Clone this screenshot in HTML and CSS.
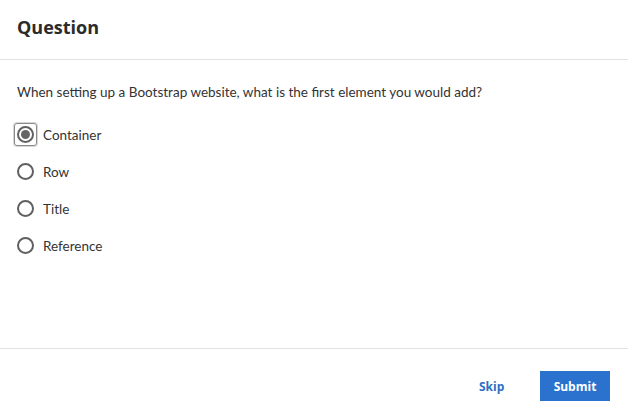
FILE: index.html
```html
<!DOCTYPE html>
<html>
<head>
<meta charset="utf-8">
<link rel="stylesheet" href="styles.css">
</head>
<body>
<div class="dialog">
  <header class="head"><h1 class="title">Question</h1></header>
  <main class="body">
    <p class="question">When setting up a Bootstrap website, what is the first element you would add?</p>
    <div class="options">
      <label class="opt"><span class="radio-wrap focus"><span class="radio checked"></span></span><span class="lbl">Container</span></label>
      <label class="opt"><span class="radio-wrap"><span class="radio"></span></span><span class="lbl">Row</span></label>
      <label class="opt"><span class="radio-wrap"><span class="radio"></span></span><span class="lbl">Title</span></label>
      <label class="opt"><span class="radio-wrap"><span class="radio"></span></span><span class="lbl">Reference</span></label>
    </div>
  </main>
  <footer class="foot">
    <button class="btn-link">Skip</button>
    <button class="btn-primary">Submit</button>
  </footer>
</div>
</body>
</html>
```
FILE: styles.css
```css
html, body { margin: 0; padding: 0; background: #fff; }
.dialog {
  width: 628px; height: 415px;
  display: flex; flex-direction: column;
  font-family: Lato, "Noto Sans", sans-serif;
  color: #333;
}
.head {
  box-sizing: border-box;
  border-bottom: 1px solid #e2e2e2;
  padding: 0 17px;
  display: flex; align-items: center;
  flex: none; height: 60px;
}
.title {
  margin: 0; font-family: "Open Sans", sans-serif; font-weight: 700;
  font-size: 18px; color: #2b2b2b; line-height: 24px; margin-top: -6px;
}
.body { flex: 1; padding: 23px 17px 0; }
.question { margin: 0; font-size: 13.5px; line-height: 18px; color: #333; }
.options { margin-top: 15px; display: flex; flex-direction: column; }
.opt { display: flex; align-items: center; height: 37px; }
.radio-wrap {
  width: 23px; height: 23px; box-sizing: border-box;
  margin-left: -3px; margin-right: 6px;
  display: flex; align-items: center; justify-content: center;
  border: 1px solid transparent; border-radius: 3px;
}
.radio-wrap.focus { border-color: #8a8a8a; box-shadow: 0 0 0 1px #d6d6d6; }
.radio {
  width: 17px; height: 17px; box-sizing: border-box;
  border: 2px solid #606060; border-radius: 50%;
  display: flex; align-items: center; justify-content: center;
}
.radio.checked::after {
  content: ""; width: 9px; height: 9px; border-radius: 50%; background: #666;
}
.lbl { font-size: 13.5px; color: #333; }
.foot {
  flex: none; height: 67px; box-sizing: border-box;
  border-top: 1px solid #e2e2e2;
  display: flex; justify-content: flex-end; align-items: flex-start;
  padding: 22px 18px 0 0; gap: 37px;
}
.btn-link, .btn-primary {
  font-family: "Open Sans", sans-serif; font-weight: 700; font-size: 12px;
  border: none; cursor: pointer; height: 30px; padding: 0;
}
.btn-link { background: none; color: #2d6fc4; width: 24px; }
.btn-primary { background: #2b72cf; color: #fff; width: 70px; }
```
